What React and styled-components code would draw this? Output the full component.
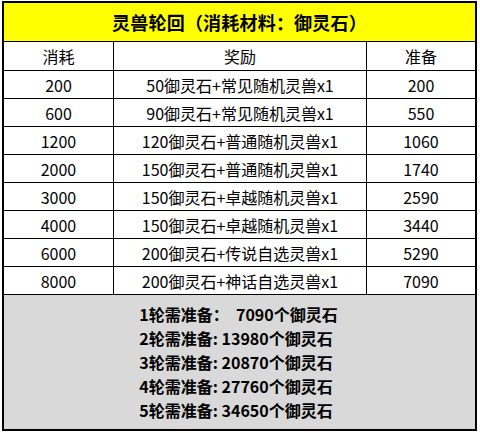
import React from "react";
import styled, { createGlobalStyle } from "styled-components";

const Global = createGlobalStyle`
  html, body { margin: 0; padding: 0; background: #fff; }
  body { font-family: "Noto Sans CJK SC", "Noto Sans", sans-serif; color: #000; }
`;

const Sheet = styled.div`
  box-sizing: border-box;
  width: 475px;
  margin: 1px 0 0 2px;
  border: 2px solid #000;
  display: flex;
  flex-direction: column;
`;

const Title = styled.div`
  height: 38px;
  background: #ffff00;
  border-bottom: 1px solid #000;
  display: flex;
  align-items: center;
  justify-content: center;
  font-size: 18px;
  font-weight: 700;
  letter-spacing: 0.2px;
`;

const Row = styled.div`
  display: grid;
  grid-template-columns: 110px 253px 1fr;
  height: ${(p) => p.$h}px;
  box-sizing: border-box;
  border-bottom: 1px solid #000;
`;

const Cell = styled.div`
  display: flex;
  align-items: center;
  justify-content: center;
  font-size: 16px;
  line-height: 1;
  border-right: ${(p) => (p.$last ? "none" : "1px solid #000")};
`;

const Summary = styled.div`
  height: 134px;
  background: #d9d9d9;
  display: flex;
  justify-content: center;
  align-items: center;
`;

const SummaryLines = styled.div`
  display: flex;
  flex-direction: column;
  font-size: 16px;
  font-weight: 700;
  line-height: 24px;
  white-space: pre;
  margin-left: -2px;
`;

const rows = [
  ["200", "50御灵石+常见随机灵兽x1", "200"],
  ["600", "90御灵石+常见随机灵兽x1", "550"],
  ["1200", "120御灵石+普通随机灵兽x1", "1060"],
  ["2000", "150御灵石+普通随机灵兽x1", "1740"],
  ["3000", "150御灵石+卓越随机灵兽x1", "2590"],
  ["4000", "150御灵石+卓越随机灵兽x1", "3440"],
  ["6000", "200御灵石+传说自选灵兽x1", "5290"],
  ["8000", "200御灵石+神话自选灵兽x1", "7090"],
];

const summary = [
  "1轮需准备：  7090个御灵石",
  "2轮需准备: 13980个御灵石",
  "3轮需准备: 20870个御灵石",
  "4轮需准备: 27760个御灵石",
  "5轮需准备: 34650个御灵石",
];

export default function App() {
  return (
    <>
      <Global />
      <Sheet>
        <Title>灵兽轮回（消耗材料：御灵石）</Title>
        <Row $h={29}>
          <Cell>消耗</Cell>
          <Cell>奖励</Cell>
          <Cell $last>准备</Cell>
        </Row>
        {rows.map((r, i) => (
          <Row key={i} $h={28}>
            <Cell>{r[0]}</Cell>
            <Cell>{r[1]}</Cell>
            <Cell $last>{r[2]}</Cell>
          </Row>
        ))}
        <Summary>
          <SummaryLines>
            {summary.map((s) => (
              <span key={s}>{s}</span>
            ))}
          </SummaryLines>
        </Summary>
      </Sheet>
    </>
  );
}
